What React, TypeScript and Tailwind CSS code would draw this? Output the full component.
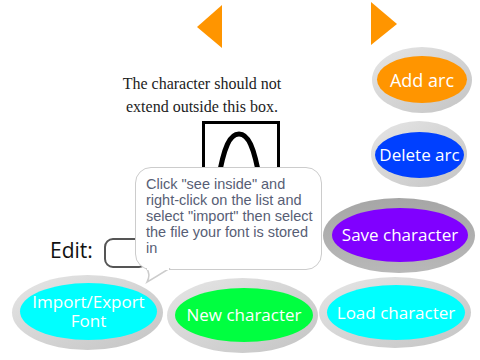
import React from "react";

interface OvalProps {
  label: React.ReactNode;
  outer: [number, number, number, number]; // x, y, w, h
  inner: [number, number, number, number];
  fill: string;
  rim?: string;
}

// one Scratch sprite button: grey rim with a coloured oval on top
const Oval: React.FC<OvalProps> = ({ label, outer, inner, fill, rim }) => {
  return (
    <>
      <div
        className={`absolute rounded-[50%] ${rim ?? "bg-gradient-to-br from-[#e6e6e6] to-[#c4c4c4]"}`}
        style={{ left: outer[0], top: outer[1], width: outer[2], height: outer[3] }}
      />
      <div
        className={`absolute rounded-[50%] flex items-center justify-center text-center text-white text-[17px] leading-[20px] ${fill}`}
        style={{ left: inner[0], top: inner[1], width: inner[2], height: inner[3] }}
      >
        {label}
      </div>
    </>
  );
};

const App: React.FC = () => {
  return (
    <div className="relative w-[480px] h-[360px] bg-white overflow-hidden font-['Open_Sans','Noto_Sans',sans-serif]">
      {/* arrows */}
      <svg className="absolute left-[196px] top-[4px]" width="28" height="46" viewBox="0 0 28 46">
        <polygon points="26,1 26,44 1,23" fill="#ff9500" />
      </svg>
      <svg className="absolute left-[370px] top-[1px]" width="30" height="46" viewBox="0 0 30 46">
        <polygon points="1,1 1,44 27,23" fill="#ff9500" />
      </svg>

      {/* hint text */}
      <div className="absolute left-[100px] top-[72px] w-[204px] text-center text-[16px] leading-[23px] text-[#222] font-['Liberation_Serif',serif]">
        The character should not
        <br />
        extend outside this box.
      </div>

      {/* glyph box */}
      <div className="absolute left-[202px] top-[121px] w-[78px] h-[80px] border-[3px] border-black bg-white" />
      <svg className="absolute left-[202px] top-[121px]" width="78" height="60" viewBox="0 0 78 60">
        <path d="M16 60 C22 25 28 13 37 13 C46 13 52 25 58 60" fill="none" stroke="#000" strokeWidth="5" />
      </svg>

      {/* right column */}
      <Oval label="Add arc" outer={[372, 47, 100, 66]} inner={[377, 56, 90, 47]} fill="bg-[#ff9500] text-[18px]" />
      <Oval label="Delete arc" outer={[371, 121, 96, 66]} inner={[375, 132, 89, 46]} fill="bg-[#0040ff] text-[16px]" />
      <Oval
        label="Save character"
        outer={[323, 198, 152, 75]}
        inner={[332, 208, 136, 54]}
        fill="bg-[#8000ff]"
        rim="bg-gradient-to-b from-[#a6a6a6] to-[#b8b8b8]"
      />

      {/* edit monitor */}
      <div className="absolute left-[50px] top-[236px] text-[21px] leading-[28px] text-[#111] font-['Open_Sans',sans-serif]">
        Edit:
      </div>
      <div className="absolute left-[104px] top-[238px] w-[44px] h-[30px] rounded-[9px] border-2 border-[#555] bg-white" />

      {/* bottom row */}
      <Oval
        label={
          <span className="leading-[19px] pb-[2px]">
            Import/Export
            <br />
            Font
          </span>
        }
        outer={[12, 275, 151, 75]}
        inner={[20, 283, 137, 57]}
        fill="bg-[#00ffff] text-[17.5px]"
      />
      <Oval label="New character" outer={[167, 278, 151, 75]} inner={[175, 288, 138, 54]} fill="bg-[#00ff40]" />
      <Oval label="Load character" outer={[319, 277, 152, 71]} inner={[327, 285, 138, 55]} fill="bg-[#00ffff]" />

      {/* speech bubble */}
      <div className="absolute left-[135px] top-[167px] w-[187px] h-[103px] rounded-[16px] border-[1.5px] border-[#ccc] bg-white pl-[10px] pr-[8px] pt-[8px] text-[14.5px] leading-[16px] text-[#575e75] font-['Liberation_Sans',sans-serif]">
        Click "see inside" and right-click on the list and select "import" then select the file your font is stored in
      </div>
      <svg className="absolute left-[140px] top-[268px]" width="36" height="16" viewBox="0 0 36 16">
        <path d="M6 0 C10 4 9 10 7 14 C14 10 22 5 30 0" fill="#fff" stroke="#ccc" strokeWidth="1.5" />
        <rect x="7" y="0" width="22" height="2" fill="#fff" />
      </svg>
    </div>
  );
};

export default App;
